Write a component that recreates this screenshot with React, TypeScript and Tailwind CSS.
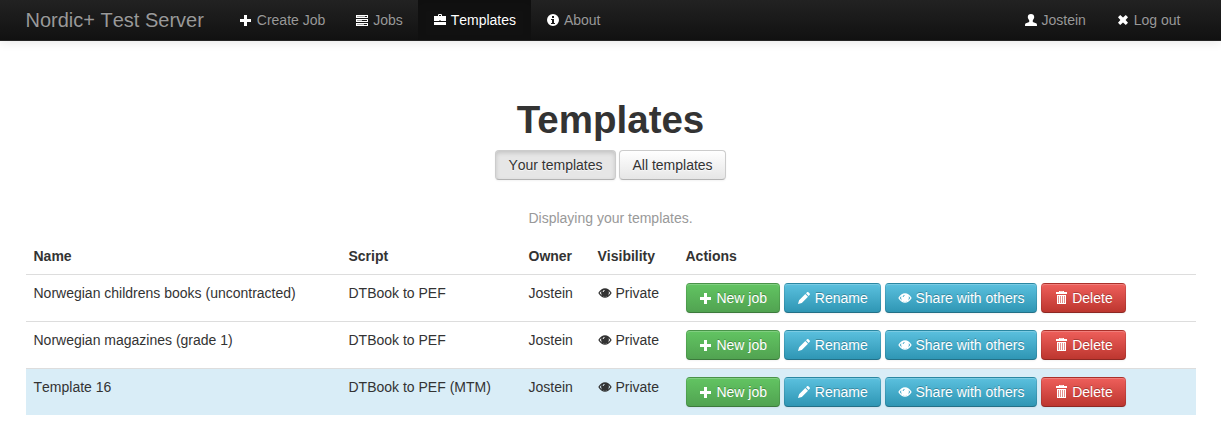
import React from "react";

type IconName = "plus" | "tasks" | "briefcase" | "info" | "user" | "remove" | "eye" | "pencil" | "trash";

const shapes: Record<IconName, React.ReactNode> = {
  plus: <path d="M5 2h3v4h4v3H8v4H5V9H1V6h4z" />,
  tasks: (
    <>
      <path fillRule="evenodd" d="M1 2h12v3H1zM1 6h12v3H1zM1 10h12v3H1zM2 3v1h10V3zM2 7v1h10V7zM2 11v1h10v-1z" />
      <path opacity=".6" d="M2 3h8v1H2zM2 7h5v1H2zM2 11h7v1H2z" />
    </>
  ),
  briefcase: <path fillRule="evenodd" d="M1 3h4V1.800L5.800 1h2.400l.8.800V3h4v5H1zM6 2v1h2V2zM6 7v.5h2V7zM1 9h12v3H1z" />,
  info: (
    <path
      fillRule="evenodd"
      d="M7 1a6 6 0 1 1 0 12A6 6 0 0 1 7 1zM6 3v2h2V3zM5 6v1h1v3H5v1h4v-1H8V6z"
    />
  ),
  user: <path d="M7 1c2 0 3.200 1.200 3.200 3 0 1.500-.7 2.400-1.400 3.200V9l3.200 1.300c.8.400 1 .9 1 2.700H1c0-1.800.2-2.300 1-2.700L5.200 9V7.200C4.500 6.400 3.800 5.500 3.800 4c0-1.800 1.200-3 3.200-3z" />,
  remove: <path d="M4.200 2L7 4.500 9.800 2 12 4.200 9.600 7 12 9.800 9.800 12 7 9.500 4.200 12 2 9.800 4.400 7 2 4.200z" />,
  eye: (
    <path
      fillRule="evenodd"
      d="M.3 7C2 4 4.400 2.300 7 2.300S12 4 13.700 7c-1.700 3-4.100 4.700-6.700 4.700S2 10 .3 7zM3.500 4.900C2.800 5.500 2.200 6.200 1.700 7 3 9 4.800 10.300 7 10.300S11 9 12.300 7c-.5-.8-1.100-1.500-1.800-2.100.3.500.4 1 .4 1.500a3.900 3.900 0 0 1-7.800 0c0-.5.100-1 .4-1.500zM6.600 4.100c-1.100.1-1.900.8-1.900 1.900h.9c0-.7.400-1 1-1.200z"
    />
  ),
  pencil: <path d="M1 13l1.100-3.800L8.300 3l2.700 2.700L4.800 11.900zM9 2.300L10.100 1.200c.4-.4.900-.4 1.300 0l1.300 1.300c.4.400.4.900 0 1.300L11.600 4.900z" />,
  trash: (
    <>
      <path
        fillRule="evenodd"
        d="M5 1V0h5v1h3v2H2V1zM6 .8V1h3V.8zM3 4h9v9H3zM4 5v7h1V5zM6 5v7h1V5zM8 5v7h1V5zM10 5v7h1V5z"
      />
      <path opacity=".4" d="M4 5h1v7H4zM6 5h1v7H6zM8 5h1v7H8zM10 5h1v7h-1z" />
    </>
  ),
};

function Icon({ name }: { name: IconName }) {
  return (
    <svg viewBox="0 0 14 14" fill="currentColor" aria-hidden="true" className="mt-px inline-block size-3.5 align-text-top">
      {shapes[name]}
    </svg>
  );
}

function NavItem({ icon, active = false, children }: { icon: IconName; active?: boolean; children: string }) {
  return (
    <a
      href="#"
      className={
        active
          ? "block bg-[#111] px-[15px] py-[10px] text-white shadow-[inset_0_3px_8px_rgba(0,0,0,0.125)] [text-shadow:0_-1px_0_rgba(0,0,0,0.25)]"
          : "block px-[15px] py-[10px] text-[#999] [text-shadow:0_-1px_0_rgba(0,0,0,0.25)]"
      }
    >
      <span className="text-white">
        <Icon name={icon} />
      </span>{" "}
      {children}
    </a>
  );
}

const tones = {
  success: "bg-[#51a351] bg-[linear-gradient(to_bottom,#62c462,#51a351)]",
  info: "bg-[#2f96b4] bg-[linear-gradient(to_bottom,#5bc0de,#2f96b4)]",
  danger: "bg-[#bd362f] bg-[linear-gradient(to_bottom,#ee5f5b,#bd362f)]",
};

function ActionButton({ tone, icon, children }: { tone: keyof typeof tones; icon: IconName; children: string }) {
  return (
    <button
      className={`${tones[tone]} rounded border border-black/10 border-b-black/25 bg-repeat-x px-3 py-1 leading-5 whitespace-nowrap text-white shadow-[inset_0_1px_0_rgba(255,255,255,0.2),0_1px_2px_rgba(0,0,0,0.05)] [text-shadow:0_-1px_0_rgba(0,0,0,0.25)]`}
    >
      <Icon name={icon} /> {children}
    </button>
  );
}

const filterButton =
  "rounded border border-[#ccc] border-b-[#b3b3b3] px-3 py-1 leading-5 text-[#333] [text-shadow:0_1px_1px_rgba(255,255,255,0.75)]";

const templates = [
  { name: "Norwegian childrens books (uncontracted)", script: "DTBook to PEF", owner: "Jostein", highlighted: false },
  { name: "Norwegian magazines (grade 1)", script: "DTBook to PEF", owner: "Jostein", highlighted: false },
  { name: "Template 16", script: "DTBook to PEF (MTM)", owner: "Jostein", highlighted: true },
];

export default function App() {
  return (
    <div className="min-h-[431px] bg-white font-['Liberation_Sans',Arial,sans-serif] text-sm leading-5 text-[#333] [font-kerning:none]">
      <header className="h-[41px] border-b border-[#252525] bg-[linear-gradient(to_bottom,#222,#111)] shadow-[0_1px_10px_rgba(0,0,0,0.1)]">
        <nav className="mx-auto flex w-[1170px]">
          <a href="#" className="py-[10px] pr-5 text-xl leading-5 text-[#999] [text-shadow:0_-1px_0_rgba(0,0,0,0.25)]">
            Nordic+ Test Server
          </a>
          <NavItem icon="plus">Create Job</NavItem>
          <NavItem icon="tasks">Jobs</NavItem>
          <NavItem icon="briefcase" active>Templates</NavItem>
          <NavItem icon="info">About</NavItem>
          <div className="ml-auto flex">
            <NavItem icon="user">Jostein</NavItem>
            <NavItem icon="remove">Log out</NavItem>
          </div>
        </nav>
      </header>

      <main className="mx-auto w-[1170px] pt-[59px]">
        <h1 className="text-center text-[38.5px] leading-10 font-bold [font-kerning:normal]">Templates</h1>
        <div className="mt-2.5 flex justify-center gap-[3.9px]">
          <button className={`${filterButton} bg-[#e6e6e6] shadow-[inset_0_2px_4px_rgba(0,0,0,0.15),0_1px_2px_rgba(0,0,0,0.05)]`}>
            Your templates
          </button>
          <button className={`${filterButton} bg-[linear-gradient(to_bottom,#fff,#e6e6e6)] shadow-[inset_0_1px_0_rgba(255,255,255,0.2),0_1px_2px_rgba(0,0,0,0.05)]`}>
            All templates
          </button>
        </div>
        <p className="mt-7 mb-2.5 text-center text-[#999]">Displaying your templates.</p>

        <table className="w-full table-fixed border-separate border-spacing-0 text-left">
          <colgroup>
            <col className="w-[315px]" />
            <col className="w-[180px]" />
            <col className="w-[69px]" />
            <col className="w-[88px]" />
            <col />
          </colgroup>
          <thead>
            <tr>
              <th className="p-2">Name</th>
              <th className="p-2">Script</th>
              <th className="p-2">Owner</th>
              <th className="p-2">Visibility</th>
              <th className="p-2">Actions</th>
            </tr>
          </thead>
          <tbody>
            {templates.map((t) => (
              <tr key={t.name} className={t.highlighted ? "bg-[#d9edf7]" : ""}>
                <td className="border-t border-[#ddd] p-2 align-top">{t.name}</td>
                <td className="border-t border-[#ddd] p-2 align-top">{t.script}</td>
                <td className="border-t border-[#ddd] p-2 align-top">{t.owner}</td>
                <td className="border-t border-[#ddd] p-2 align-top whitespace-nowrap">
                  <Icon name="eye" /> Private
                </td>
                <td className="border-t border-[#ddd] p-2 align-top">
                  <div className="flex gap-[3.9px]">
                    <ActionButton tone="success" icon="plus">New job</ActionButton>
                    <ActionButton tone="info" icon="pencil">Rename</ActionButton>
                    <ActionButton tone="info" icon="eye">Share with others</ActionButton>
                    <ActionButton tone="danger" icon="trash">Delete</ActionButton>
                  </div>
                </td>
              </tr>
            ))}
          </tbody>
        </table>
      </main>
    </div>
  );
}
